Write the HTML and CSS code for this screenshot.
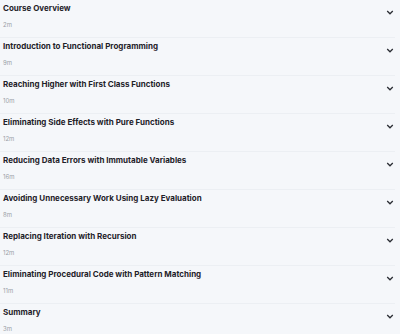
FILE: index.html
```html
<!DOCTYPE html>
<html lang="en">
<head>
    <meta charset="UTF-8">
    <meta name="viewport" content="width=device-width, initial-scale=1.0">
    <title>Course content</title>
    <link rel="stylesheet" href="styles.css">
</head>
<body>
    <div class="modulos">
        <div class="modulo">
            <div class="info">
                <h3 class="titulo">Course Overview</h3>
                <span class="duracion">2m</span>
            </div>
            <svg class="flecha" viewBox="0 0 10 6"><path d="M1.5 1.2 L5 4.6 L8.5 1.2"/></svg>
        </div>
        <div class="modulo">
            <div class="info">
                <h3 class="titulo">Introduction to Functional Programming</h3>
                <span class="duracion">9m</span>
            </div>
            <svg class="flecha" viewBox="0 0 10 6"><path d="M1.5 1.2 L5 4.6 L8.5 1.2"/></svg>
        </div>
        <div class="modulo">
            <div class="info">
                <h3 class="titulo">Reaching Higher with First Class Functions</h3>
                <span class="duracion">10m</span>
            </div>
            <svg class="flecha" viewBox="0 0 10 6"><path d="M1.5 1.2 L5 4.6 L8.5 1.2"/></svg>
        </div>
        <div class="modulo">
            <div class="info">
                <h3 class="titulo">Eliminating Side Effects with Pure Functions</h3>
                <span class="duracion">12m</span>
            </div>
            <svg class="flecha" viewBox="0 0 10 6"><path d="M1.5 1.2 L5 4.6 L8.5 1.2"/></svg>
        </div>
        <div class="modulo">
            <div class="info">
                <h3 class="titulo">Reducing Data Errors with Immutable Variables</h3>
                <span class="duracion">16m</span>
            </div>
            <svg class="flecha" viewBox="0 0 10 6"><path d="M1.5 1.2 L5 4.6 L8.5 1.2"/></svg>
        </div>
        <div class="modulo">
            <div class="info">
                <h3 class="titulo">Avoiding Unnecessary Work Using Lazy Evaluation</h3>
                <span class="duracion">8m</span>
            </div>
            <svg class="flecha" viewBox="0 0 10 6"><path d="M1.5 1.2 L5 4.6 L8.5 1.2"/></svg>
        </div>
        <div class="modulo">
            <div class="info">
                <h3 class="titulo">Replacing Iteration with Recursion</h3>
                <span class="duracion">12m</span>
            </div>
            <svg class="flecha" viewBox="0 0 10 6"><path d="M1.5 1.2 L5 4.6 L8.5 1.2"/></svg>
        </div>
        <div class="modulo">
            <div class="info">
                <h3 class="titulo">Eliminating Procedural Code with Pattern Matching</h3>
                <span class="duracion">11m</span>
            </div>
            <svg class="flecha" viewBox="0 0 10 6"><path d="M1.5 1.2 L5 4.6 L8.5 1.2"/></svg>
        </div>
        <div class="modulo">
            <div class="info">
                <h3 class="titulo">Summary</h3>
                <span class="duracion">3m</span>
            </div>
            <svg class="flecha" viewBox="0 0 10 6"><path d="M1.5 1.2 L5 4.6 L8.5 1.2"/></svg>
        </div>
    </div>
</body>
</html>
```

FILE: styles.css
```css
body {
    margin: 0;
    background-color: #f5f7fa;
    font-family: Inter, "Noto Sans", sans-serif;
    color: #1f2229;
}

.modulos {
    width: 395px;
}

.modulo {
    display: flex;
    align-items: flex-start;
    justify-content: space-between;
    height: 37px;
    border-bottom: 1px solid #eceff3;
}

.info {
    display: flex;
    flex-direction: column;
    padding-left: 3px;
}

.titulo {
    margin: 0;
    padding-top: 3px;
    font-size: 8px;
    line-height: 11px;
    font-weight: 700;
}

.duracion {
    margin-top: 7px;
    font-size: 6px;
    line-height: 8px;
    color: #9a9ea6;
}

.flecha {
    width: 8px;
    height: 5px;
    margin-top: 10px;
    margin-right: 1px;
    fill: none;
    stroke: #2a2d33;
    stroke-width: 1.6;
}
```
